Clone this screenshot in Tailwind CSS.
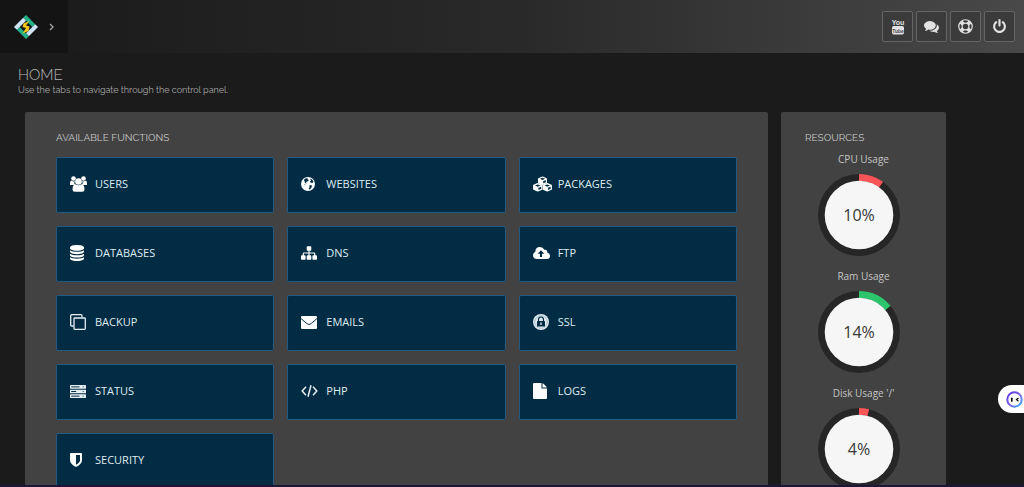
<!DOCTYPE html>
<html lang="en">
<head>
<meta charset="utf-8">
<meta name="viewport" content="width=device-width, initial-scale=1">
<title>Home</title>
<script src="https://cdn.jsdelivr.net/npm/@tailwindcss/browser@4"></script>
</head>
<body class="h-screen overflow-hidden bg-[#1b1b1b] font-['Open_Sans',sans-serif] text-[#c4c4c4]">

<header class="flex h-[53px] bg-linear-to-r from-[#1a1a1a] via-[#292929] to-[#494949]">
  <div class="flex w-[68px] items-center gap-2 bg-[#141414] pl-[13px]">
    <a href="#" aria-label="Dashboard">
      <svg class="size-[26px]" viewBox="0 0 26 26">
        <g transform="rotate(45 13 13)">
          <rect x="5" y="5" width="16" height="16" fill="#11191b"/>
          <rect x="4.500" y="4.500" width="13" height="4" fill="#22b189"/>
          <rect x="17.500" y="4.500" width="4" height="13" fill="#cfe4f5"/>
          <rect x="8.500" y="17.500" width="13" height="4" fill="#22b189"/>
          <rect x="4.500" y="8.500" width="4" height="13" fill="#cfe4f5"/>
        </g>
        <path d="M16.500 7 10.500 9.500 9.500 13 13 14 9.500 19.500 15.500 17 16.500 12.500 13 11.500z" fill="#f5c518"/>
      </svg>
    </a>
    <button type="button" aria-label="Expand menu" class="flex h-6 w-2 items-center justify-center">
      <svg class="h-2 w-[5px]" viewBox="0 0 5 8" fill="none" stroke="#a5a5a5" stroke-width="1.3"><path d="M1 1l3 3-3 3"/></svg>
    </button>
  </div>
  <nav class="ml-auto flex items-center gap-[3px] pr-[9px]">
    <button type="button" aria-label="YouTube" class="flex size-[31px] items-center justify-center rounded-xs border border-[#656565] bg-[#3b3b3b]">
      <svg class="size-4" viewBox="0 0 16 16" fill="#e2e2e2">
        <text x="8" y="6" text-anchor="middle" font-family="Liberation Sans Narrow, Liberation Sans, sans-serif" font-size="7" font-weight="700">You</text>
        <rect x="2" y="7" width="12" height="8.500" rx="1.800"/>
        <text x="8" y="13.500" text-anchor="middle" font-family="Liberation Sans Narrow, Liberation Sans, sans-serif" font-size="5" font-weight="700" fill="#4a4a4a">Tube</text>
      </svg>
    </button>
    <button type="button" aria-label="Comments" class="flex size-[31px] items-center justify-center rounded-xs border border-[#656565] bg-[#3b3b3b]">
      <svg class="size-[15px]" viewBox="0 0 1792 1792" fill="#e2e2e2"><path d="M1408 768q0 139-94 257t-256.500 186.500-353.500 68.500q-86 0-176-16-124 88-278 128-36 9-86 16h-3q-20 0-32-29-2-15 15-34 74-74 122-181-124-72-195-177t-71-224q0-139 94-257t256.500-186.500 353.500-68.500 353.500 68.500 256.500 186.500 94 257zm384 256q0 120-71 224.500t-195 176.500q48 107 122 181 17 19 15 34-10 30-35 29-50-7-86-16-154-40-278-128-90 16-176 16-271 0-472-132 58 4 88 4 161 0 309-45t264-129q125-92 192-212t67-254q0-77-23-152 129 71 204 178t75 230z"/></svg>
    </button>
    <button type="button" aria-label="Help" class="flex size-[31px] items-center justify-center rounded-xs border border-[#656565] bg-[#3b3b3b]">
      <svg class="size-[15px]" viewBox="0 0 16 16" fill="none" stroke="#e2e2e2">
        <circle cx="8" cy="8" r="7.200" stroke-width="1.300"/><circle cx="8" cy="8" r="3.600" stroke-width="1.300"/>
        <path d="M3.200 3.200l2.300 2.300M12.800 3.200l-2.300 2.300M3.200 12.800l2.300-2.300M12.800 12.800l-2.300-2.300" stroke-width="4"/>
      </svg>
    </button>
    <button type="button" aria-label="Log out" class="flex size-[31px] items-center justify-center rounded-xs border border-[#656565] bg-[#3b3b3b]">
      <svg class="size-[15px]" viewBox="0 0 1792 1792" fill="#e2e2e2"><path d="M1664 896q0 156-61 298t-164 245-245 164-298 61-298-61-245-164-164-245-61-298q0-182 80.500-343t226.500-270q43-32 95.500-25t83.500 50q32 42 24.500 94.500t-49.500 84.500q-98 74-151.500 181t-53.500 228q0 104 40.500 198.500t109.500 163.500 163.500 109.500 198.500 40.500 198.500-40.500 163.500-109.500 109.500-163.500 40.500-198.500q0-121-53.500-228t-151.500-181q-42-32-49.500-84.500t24.500-94.500q31-43 84-50t95 25q146 109 226.500 270t80.500 343zm-640-768v640q0 52-38 90t-90 38-90-38-38-90v-640q0-52 38-90t90-38 90 38 38 90z"/></svg>
    </button>
  </nav>
</header>

<div class="px-[18px] pt-[13px] font-[Raleway,Lato,sans-serif]">
  <h1 class="text-[15px] leading-[18px] font-light text-[#b5b5b5]">HOME</h1>
  <p class="text-[9px] leading-3 text-[#a8a8a8]">Use the tabs to navigate through the control panel.</p>
</div>

<main class="flex items-start gap-[13px] pt-4 pr-[78px] pl-[25px]">
  <section class="min-w-0 flex-1 rounded-xs bg-[#424242] px-[31px] pt-[19px] pb-8">
    <h2 class="font-[Raleway,Lato,sans-serif] text-[10px] leading-[14px] text-[#c8c8c8]">AVAILABLE FUNCTIONS</h2>
    <div class="mt-3 grid grid-cols-3 gap-[13px] text-[11px] text-[#dfebf2]">
      <a href="#" class="flex h-14 items-center rounded-xs border border-[#235a82] bg-[#022c43] pb-[2px] pl-[13px]">
        <span class="w-[25px] shrink-0"><svg class="h-4 w-[17px]" viewBox="0 0 17 16" fill="#fff"><circle cx="3.500" cy="2.500" r="2.300"/><circle cx="13.500" cy="2.500" r="2.300"/><path d="M0 9V7q0-2.500 1.500-2.500Q3.500 6 5 5q-1.500 2 0 4zM17 9V7q0-2.500-1.500-2.500Q13.500 6 12 5q1.500 2 0 4z"/><circle cx="8.500" cy="5.500" r="3.300"/><path d="M2.500 13.500q0-5 3-5.200 3 2 6 0 3 .2 3 5.200 0 2.200-2.200 2.200H4.700q-2.200 0-2.200-2.200z"/></svg></span>USERS
      </a>
      <a href="#" class="flex h-14 items-center rounded-xs border border-[#235a82] bg-[#022c43] pb-[2px] pl-[13px]">
        <span class="w-[25px] shrink-0"><svg class="size-[14px]" viewBox="0 0 14 14"><circle cx="7" cy="7" r="7" fill="#fff"/><path d="M3 2.500 5 1.200 7 1.500 6.500 2.500 8 3 6.500 4.500 5 5 5.500 6.500 4 6zM9 1.500l2 1 1.500 2-1 1.500-2-.5-.5-1 1-1zM8.500 8l2.500.5-.5 2L9 12.500 7.500 12 8.500 10.500zM3 7l1.500 1-.5.5z" fill="#022c43"/></svg></span>WEBSITES
      </a>
      <a href="#" class="flex h-14 items-center rounded-xs border border-[#235a82] bg-[#022c43] pb-[2px] pl-[13px]">
        <span class="w-[25px] shrink-0"><svg class="h-4 w-[19px]" viewBox="0 0 20 16"><g fill="#fff" stroke="#fff" stroke-width="1.400" stroke-linejoin="round"><path d="M10 .7l4 1.800v4l-4 1.800-4-1.800v-4z"/><path d="M5 7.700l4.200 1.800v4L5 15.300.8 13.500v-4z"/><path d="M15 7.700l4.200 1.800v4L15 15.300l-4.200-1.800v-4z"/></g><g fill="#022c43"><path d="M10 1.300l2.700 1.200L10 3.700 7.300 2.500zM10.700 5l2.800-1.200v2.300l-2.800 1.200zM5 8.400l2.800 1.200L5 10.800 2.200 9.600zM5.700 12l2.900-1.200v2.300l-2.900 1.200zM15 8.400l2.800 1.200-2.800 1.200-2.800-1.200zM15.700 12l2.900-1.200v2.300l-2.900 1.200z"/></g></svg></span>PACKAGES
      </a>
      <a href="#" class="flex h-14 items-center rounded-xs border border-[#235a82] bg-[#022c43] pb-[2px] pl-[13px]">
        <span class="w-[25px] shrink-0"><svg class="h-4 w-[14px]" viewBox="128 0 1536 1792" preserveAspectRatio="none" fill="#fff"><path d="M896 768q237 0 443-43t325-127v170q0 69-103 128t-280 93.500-385 34.500-385-34.500-280-93.500-103-128v-170q119 84 325 127t443 43zm0 768q237 0 443-43t325-127v170q0 69-103 128t-280 93.500-385 34.500-385-34.500-280-93.500-103-128v-170q119 84 325 127t443 43zm0-384q237 0 443-43t325-127v170q0 69-103 128t-280 93.500-385 34.500-385-34.500-280-93.500-103-128v-170q119 84 325 127t443 43zm0-1152q208 0 385 34.500t280 93.500 103 128v128q0 69-103 128t-280 93.500-385 34.500-385-34.500-280-93.500-103-128v-128q0-69 103-128t280-93.500 385-34.500z"/></svg></span>DATABASES
      </a>
      <a href="#" class="flex h-14 items-center rounded-xs border border-[#235a82] bg-[#022c43] pb-[2px] pl-[13px]">
        <span class="w-[25px] shrink-0"><svg class="size-4" viewBox="0 0 1792 1792" fill="#fff"><path d="M1792 1248v320q0 40-28 68t-68 28h-320q-40 0-68-28t-28-68v-320q0-40 28-68t68-28h96v-192h-512v192h96q40 0 68 28t28 68v320q0 40-28 68t-68 28h-320q-40 0-68-28t-28-68v-320q0-40 28-68t68-28h96v-192h-512v192h96q40 0 68 28t28 68v320q0 40-28 68t-68 28h-320q-40 0-68-28t-28-68v-320q0-40 28-68t68-28h96v-192q0-52 38-90t90-38h512v-192h-96q-40 0-68-28t-28-68v-320q0-40 28-68t68-28h320q40 0 68 28t28 68v320q0 40-28 68t-68 28h-96v192h512q52 0 90 38t38 90v192h96q40 0 68 28t28 68z"/></svg></span>DNS
      </a>
      <a href="#" class="flex h-14 items-center rounded-xs border border-[#235a82] bg-[#022c43] pb-[2px] pl-[13px]">
        <span class="w-[25px] shrink-0"><svg class="h-3 w-[17px]" viewBox="0 0 17 12"><path d="M4 12Q0 12 0 8.300 0 6 2.300 4.800 2.300 0 7 0q3 0 4.300 2.800Q14.300 2 14.300 5.500 17 6.300 17 9q0 3-3 3z" fill="#fff"/><path d="M8 3.200l3.300 3.600H9V10H7V6.800H4.700z" fill="#022c43"/></svg></span>FTP
      </a>
      <a href="#" class="flex h-14 items-center rounded-xs border border-[#235a82] bg-[#022c43] pb-[2px] pl-[13px]">
        <span class="w-[25px] shrink-0"><svg class="size-4" viewBox="0 0 16 16" fill="none" stroke="#e6eff4" stroke-width="1.300"><path d="M3.500 12H1.800Q.7 12 .7 11V1.700Q.7.7 1.700.7H11q1 0 1 1v1.500"/><rect x="4" y="4" width="11.300" height="11.300" rx=".8"/></svg></span>BACKUP
      </a>
      <a href="#" class="flex h-14 items-center rounded-xs border border-[#235a82] bg-[#022c43] pb-[2px] pl-[13px]">
        <span class="w-[25px] shrink-0"><svg class="h-[13px] w-4" viewBox="0 0 16 13"><rect width="16" height="13" rx="1" fill="#fff"/><path d="M0 2.500Q6.500 8.500 8 8.500T16 2.500" fill="none" stroke="#022c43" stroke-width="1"/></svg></span>EMAILS
      </a>
      <a href="#" class="flex h-14 items-center rounded-xs border border-[#235a82] bg-[#022c43] pb-[2px] pl-[13px]">
        <span class="w-[25px] shrink-0"><svg class="size-4" viewBox="0 0 16 16"><circle cx="8" cy="8" r="8" fill="#dfeaf0"/><circle cx="8" cy="8" r="6.300" fill="none" stroke="#7c97a6" stroke-width=".5"/><rect x="4" y="7" width="8" height="5.500" rx=".5" fill="#022c43"/><path d="M5.500 7V5.500a2.500 2.500 0 015 0V7" fill="none" stroke="#022c43" stroke-width="1.200"/><path d="M8 8.500v2.500" stroke="#fff" stroke-width="1.200"/></svg></span>SSL
      </a>
      <a href="#" class="flex h-14 items-center rounded-xs border border-[#235a82] bg-[#022c43] pb-[2px] pl-[13px]">
        <span class="w-[25px] shrink-0"><svg class="h-[13px] w-4" viewBox="0 0 16 13"><g fill="#e6eff4"><rect width="16" height="3.700" rx=".4"/><rect y="4.650" width="16" height="3.700" rx=".4"/><rect y="9.300" width="16" height="3.700" rx=".4"/></g><path d="M1.200 1.850h8.300M1.200 6.500h5M1.200 11.150h8.300" stroke="#022c43" stroke-width="1"/><path d="M12.500 1.850h1.500M12.500 6.500h1.500M12.500 11.150h1.500" stroke="#5c7b8d" stroke-width="1"/></svg></span>STATUS
      </a>
      <a href="#" class="flex h-14 items-center rounded-xs border border-[#235a82] bg-[#022c43] pb-[2px] pl-[13px]">
        <span class="w-[25px] shrink-0"><svg class="h-3 w-[17px]" viewBox="0 0 17 12" fill="none" stroke="#e6eff4" stroke-width="1.500"><path d="M5 1.800 1.200 6 5 10.200M12 1.800 15.800 6 12 10.200M10 .3 7 11.700"/></svg></span>PHP
      </a>
      <a href="#" class="flex h-14 items-center rounded-xs border border-[#235a82] bg-[#022c43] pb-[2px] pl-[13px]">
        <span class="w-[25px] shrink-0"><svg class="h-4 w-[14px]" viewBox="0 0 14 16" fill="#fff"><path d="M1 0h7.500v5.500H14V15q0 1-1 1H1q-1 0-1-1V1q0-1 1-1z"/><path d="M9.500.2q.5.100 1 .6l2.700 2.700q.5.500.6 1H9.500z"/></svg></span>LOGS
      </a>
      <a href="#" class="flex h-14 items-center rounded-xs border border-[#235a82] bg-[#022c43] pb-[2px] pl-[13px]">
        <span class="w-[25px] shrink-0"><svg class="h-[14px] w-3" viewBox="0 0 12 14"><path d="M.8 0h10.400q.8 0 .8.800V7q0 4-6 7-6-3-6-7V.8Q0 0 .8 0z" fill="#fff"/><path d="M6 2h4v5.200q0 2.300-4 4.600z" fill="#022c43"/></svg></span>SECURITY
      </a>
    </div>
  </section>

  <aside class="w-[165px] shrink-0 rounded-xs bg-[#424242] pt-[19px] pb-8">
    <h2 class="px-6 font-[Raleway,Lato,sans-serif] text-[10px] leading-[14px] text-[#c8c8c8]">RESOURCES</h2>
    <div class="mt-[6px] flex flex-col gap-3">
      <div>
        <h3 class="text-center text-[10px] leading-4">CPU Usage</h3>
        <svg class="mt-[7px] ml-[37px] size-[82px]" viewBox="0 0 82 82" role="img" aria-label="CPU usage 10%">
          <circle cx="41" cy="41" r="41" fill="#262626"/>
          <circle cx="41" cy="41" r="37.500" fill="none" stroke="#fc5558" stroke-width="7" pathLength="100" stroke-dasharray="10 90" transform="rotate(-90 41 41)"/>
          <circle cx="41" cy="41" r="34.300" fill="#f6f6f6"/>
          <text x="41" y="47" text-anchor="middle" class="text-base" fill="#383838">10%</text>
        </svg>
      </div>
      <div>
        <h3 class="text-center text-[10px] leading-4">Ram Usage</h3>
        <svg class="mt-[7px] ml-[37px] size-[82px]" viewBox="0 0 82 82" role="img" aria-label="RAM usage 14%">
          <circle cx="41" cy="41" r="41" fill="#262626"/>
          <circle cx="41" cy="41" r="37.500" fill="none" stroke="#2dc56b" stroke-width="7" pathLength="100" stroke-dasharray="14 86" transform="rotate(-90 41 41)"/>
          <circle cx="41" cy="41" r="34.300" fill="#f6f6f6"/>
          <text x="41" y="47" text-anchor="middle" class="text-base" fill="#383838">14%</text>
        </svg>
      </div>
      <div>
        <h3 class="text-center text-[10px] leading-4">Disk Usage '/'</h3>
        <svg class="mt-[7px] ml-[37px] size-[82px]" viewBox="0 0 82 82" role="img" aria-label="Disk usage 4%">
          <circle cx="41" cy="41" r="41" fill="#262626"/>
          <circle cx="41" cy="41" r="37.500" fill="none" stroke="#fc5558" stroke-width="7" pathLength="100" stroke-dasharray="4 96" transform="rotate(-90 41 41)"/>
          <circle cx="41" cy="41" r="34.300" fill="#f6f6f6"/>
          <text x="41" y="47" text-anchor="middle" class="text-base" fill="#383838">4%</text>
        </svg>
      </div>
    </div>
  </aside>
</main>

<!-- Floating assistant -->
<button type="button" aria-label="Open assistant" class="fixed right-0 bottom-[74px] flex h-7 w-[26px] items-center rounded-l-full bg-white pl-2">
  <svg class="size-[17px] shrink-0" viewBox="0 0 17 17">
    <defs><linearGradient id="ring" x1="0" y1="0" x2="1" y2="1"><stop offset="0" stop-color="#5b35e0"/><stop offset=".5" stop-color="#7a5cf0"/><stop offset="1" stop-color="#35b5f2"/></linearGradient></defs>
    <circle cx="8.500" cy="8.500" r="7.200" fill="#fff" stroke="url(#ring)" stroke-width="2"/>
    <path d="M5.800 7.300v2.600" stroke="#111" stroke-width="1.700" stroke-linecap="round"/>
    <path d="M12.500 7l-2 1.600 2 1.600" fill="none" stroke="#111" stroke-width="1.300"/>
  </svg>
</button>
<div class="fixed inset-x-0 bottom-0 h-[2px] bg-[#1c1638]"></div>
</body>
</html>
